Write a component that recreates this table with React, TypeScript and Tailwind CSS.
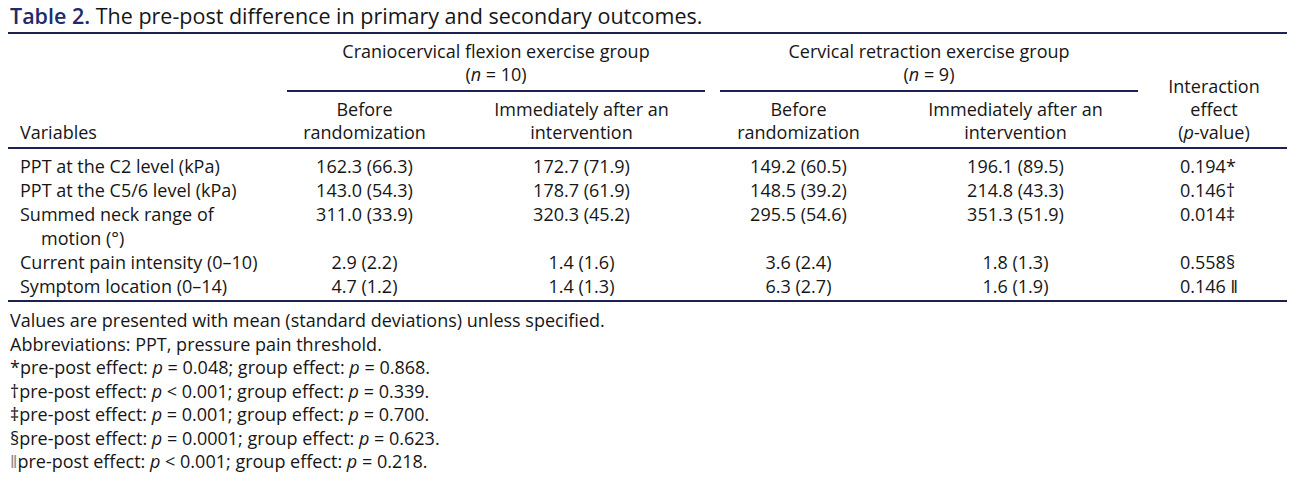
const rule = "h-[2px] bg-[#1d2152]";

type Row = { label: React.ReactNode; values: string[]; effect: React.ReactNode };

const rows: Row[] = [
  { label: "PPT at the C2 level (kPa)", values: ["162.3 (66.3)", "172.7 (71.9)", "149.2 (60.5)", "196.1 (89.5)"], effect: "0.194*" },
  { label: "PPT at the C5/6 level (kPa)", values: ["143.0 (54.3)", "178.7 (61.9)", "148.5 (39.2)", "214.8 (43.3)"], effect: "0.146†" },
  {
    label: (
      <>
        Summed neck range of
        <br />
        <span className="pl-[21px]">motion (°)</span>
      </>
    ),
    values: ["311.0 (33.9)", "320.3 (45.2)", "295.5 (54.6)", "351.3 (51.9)"],
    effect: "0.014‡",
  },
  { label: "Current pain intensity (0–10)", values: ["2.9 (2.2)", "1.4 (1.6)", "3.6 (2.4)", "1.8 (1.3)"], effect: "0.558§" },
  { label: "Symptom location (0–14)", values: ["4.7 (1.2)", "1.4 (1.3)", "6.3 (2.7)", "1.6 (1.9)"], effect: "0.146 ‖" },
];

const notes: { mark: React.ReactNode; op: string; pre: string; group: string }[] = [
  { mark: "*", op: "=", pre: "0.048", group: "0.868" },
  { mark: "†", op: "<", pre: "0.001", group: "0.339" },
  { mark: "‡", op: "=", pre: "0.001", group: "0.700" },
  { mark: "§", op: "=", pre: "0.0001", group: "0.623" },
  { mark: <span className="text-[#8a8a8a]">‖</span>, op: "<", pre: "0.001", group: "0.218" },
];

const cols = "grid grid-cols-[248px_217px_217px_217px_217px_1fr]";

export default function App() {
  return (
    <div className="h-[498px] w-[1312px] bg-white text-[18px] leading-[23px] text-[#161616] [font-family:'Open_Sans',sans-serif]">
      <div className="ml-[8px] w-[1279px]">
        {/* Caption */}
        <div className="pt-[2px] pl-[2px] text-[21.5px] leading-[28px]">
          <span className="font-semibold text-[#222a6b]">Table 2.</span> The pre-post difference in primary and secondary outcomes.
        </div>
        <div className={`mt-[2px] ${rule}`} />

        {/* Header */}
        <div className={`${cols} pt-[6px] pb-[3px]`}>
          <div className="col-start-1 row-span-2 row-start-1 self-end pl-[12px]">Variables</div>
          <div className="col-span-2 col-start-2 row-start-1">
            <div className="mr-[-15px] ml-[31px] border-b-2 border-[#1d2152] pb-[4px] text-center">
              Craniocervical flexion exercise group
              <br />(<i>n</i> = 10)
            </div>
          </div>
          <div className="col-span-2 col-start-4 row-start-1">
            <div className="mr-[-14px] ml-[30px] border-b-2 border-[#1d2152] pb-[4px] text-center">
              Cervical retraction exercise group
              <br />(<i>n</i> = 9)
            </div>
          </div>
          <div className="col-start-6 row-span-2 row-start-1 self-end pl-[17px] text-center">
            Interaction
            <br />
            effect
            <br />(<i>p</i>-value)
          </div>
          <div className="col-start-2 row-start-2 pt-[6px] text-center">
            Before
            <br />
            randomization
          </div>
          <div className="col-start-3 row-start-2 pt-[6px] text-center">
            Immediately after an
            <br />
            intervention
          </div>
          <div className="col-start-4 row-start-2 pt-[6px] text-center">
            Before
            <br />
            randomization
          </div>
          <div className="col-start-5 row-start-2 pt-[6px] text-center">
            Immediately after an
            <br />
            intervention
          </div>
        </div>
        <div className={rule} />

        {/* Body */}
        <div className="pt-[5px] pb-[2px] leading-[24px]">
          {rows.map((row, i) => (
            <div key={i} className={cols}>
              <div className="pl-[12px] whitespace-nowrap">{row.label}</div>
              {row.values.map((v, j) => (
                <div key={j} className="text-center">
                  {v}
                </div>
              ))}
              <div className="pl-[56px]">{row.effect}</div>
            </div>
          ))}
        </div>
        <div className={rule} />

        {/* Footnotes */}
        <div className="pt-[7px] pl-[2px] leading-[23.5px]">
          <p>Values are presented with mean (standard deviations) unless specified.</p>
          <p>Abbreviations: PPT, pressure pain threshold.</p>
          {notes.map((n, i) => (
            <p key={i}>
              {n.mark}pre-post effect: <i>p</i> {n.op} {n.pre}; group effect: <i>p</i> = {n.group}.
            </p>
          ))}
        </div>
      </div>
    </div>
  );
}
